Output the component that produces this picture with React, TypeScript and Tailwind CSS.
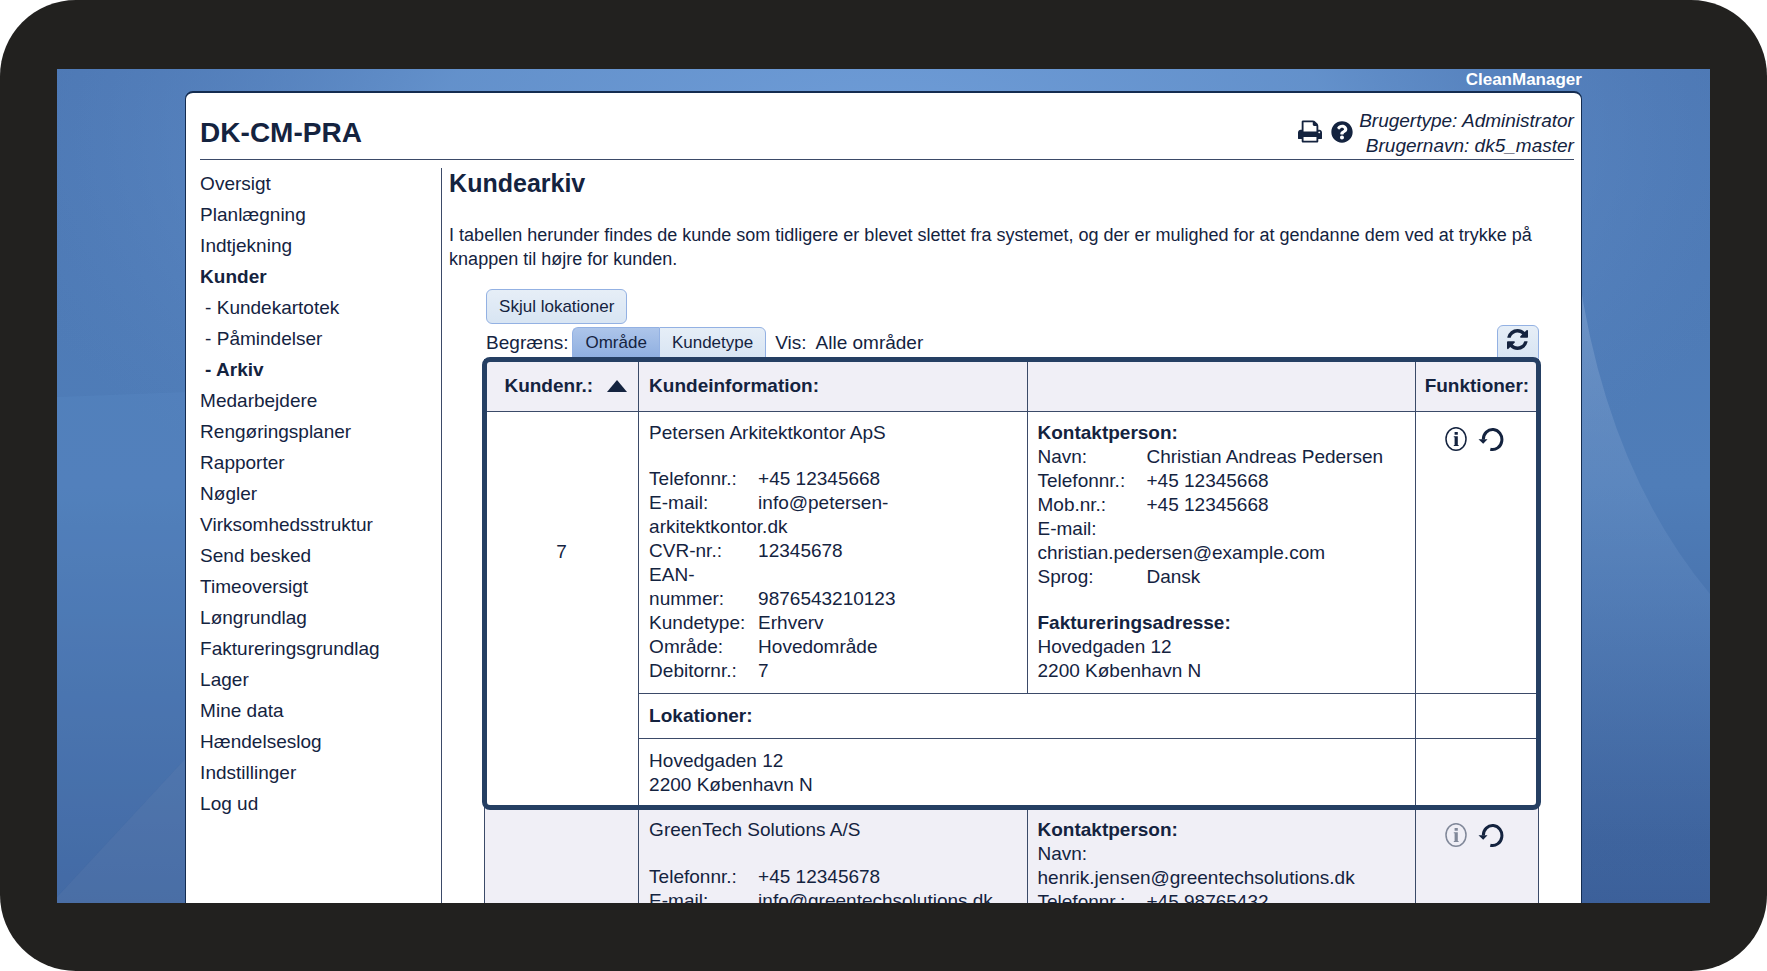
import type { ReactNode } from 'react';
import { FaQuestionCircle } from 'react-icons/fa';

const nav: { label: string; bold?: boolean; sub?: boolean }[] = [
  { label: 'Oversigt' },
  { label: 'Planlægning' },
  { label: 'Indtjekning' },
  { label: 'Kunder', bold: true },
  { label: 'Kundekartotek', sub: true },
  { label: 'Påmindelser', sub: true },
  { label: 'Arkiv', sub: true, bold: true },
  { label: 'Medarbejdere' },
  { label: 'Rengøringsplaner' },
  { label: 'Rapporter' },
  { label: 'Nøgler' },
  { label: 'Virksomhedsstruktur' },
  { label: 'Send besked' },
  { label: 'Timeoversigt' },
  { label: 'Løngrundlag' },
  { label: 'Faktureringsgrundlag' },
  { label: 'Lager' },
  { label: 'Mine data' },
  { label: 'Hændelseslog' },
  { label: 'Indstillinger' },
  { label: 'Log ud' },
];

function Backdrop() {
  return (
    <svg
      className="absolute inset-0 size-full"
      viewBox="0 0 1652 834"
      preserveAspectRatio="none"
      aria-hidden="true"
    >
      <defs>
        <linearGradient id="base" x1="0" y1="0" x2="0" y2="1">
          <stop offset="0" stopColor="#4d78b4" />
          <stop offset="0.5" stopColor="#4f7db8" />
          <stop offset="1" stopColor="#3b5f99" />
        </linearGradient>
        <radialGradient id="glow" cx="0.5" cy="0.1" r="0.55">
          <stop offset="0" stopColor="#6f9dd8" />
          <stop offset="0.5" stopColor="#6795cf" stopOpacity="0.85" />
          <stop offset="1" stopColor="#5580bd" stopOpacity="0" />
        </radialGradient>
        <linearGradient id="sweep" x1="0" y1="0" x2="0" y2="1">
          <stop offset="0" stopColor="#86a6d0" stopOpacity="0.55" />
          <stop offset="0.5" stopColor="#6c93c8" stopOpacity="0.25" />
          <stop offset="0.9" stopColor="#3f659f" stopOpacity="0.2" />
        </linearGradient>
      </defs>
      <rect width="1652" height="834" fill="url(#base)" />
      <rect width="1652" height="834" fill="url(#glow)" />
      <path d="M0 328 L128 323 V690 L0 828 Z" fill="#5a8cc6" opacity="0.25" />
      <path d="M0 828 L128 690 V834 H0 Z" fill="#6d93c4" opacity="0.3" />
      <path d="M1520 200 Q1548 400 1652 525 V834 H1520 Z" fill="url(#sweep)" />
    </svg>
  );
}

function PrintIcon() {
  return (
    <svg viewBox="0 128 1664 1536" className="h-[23px] w-6" fill="currentColor" aria-hidden="true">
      <path d="M384 1536h896v-256h-896v256zm0-640h896v-384h-160q-40 0-68-28t-28-68v-160h-640v640zm1152 64q0-26-19-45t-45-19-45 19-19 45 19 45 45 19 45-19 19-45zm128 0v416q0 13-9.500 22.500t-22.500 9.500h-224v160q0 40-28 68t-68 28h-960q-40 0-68-28t-28-68v-160h-224q-13 0-22.500-9.500t-9.500-22.500v-416q0-79 56.500-135.500t135.500-56.500h64v-544q0-40 28-68t68-28h672q40 0 88 20t76 48l152 152q28 28 48 76t20 88v256h64q79 0 135.500 56.500t56.500 135.500z" />
    </svg>
  );
}

function RefreshIcon() {
  return (
    <svg viewBox="0 0 1536 1536" className="size-[21px]" fill="currentColor" aria-hidden="true">
      <path d="M1511 928q0 5-1 7-64 268-268 434.500T764 1536q-146 0-282.500-55T238 1324l-129 129q-19 19-45 19t-45-19-19-45V960q0-26 19-45t45-19h448q26 0 45 19t19 45-19 45l-137 137q71 66 161 102t187 36q134 0 250-65t186-179q11-17 53-117 8-23 30-23h192q13 0 22.500 9.500t9.500 22.500zm25-800v448q0 26-19 45t-45 19h-448q-26 0-45-19t-19-45 19-45l138-138Q969 256 768 256q-134 0-250 65T332 500q-11 17-53 117-8 23-30 23H50q-13 0-22.500-9.500T18 608v-7q65-268 270-434.500T768 0q146 0 284 55.500T1297 212l130-129q19-19 45-19t45 19 19 45z" />
    </svg>
  );
}

function InfoIcon() {
  return (
    <svg viewBox="0 0 24 26" className="h-[26px] w-6" aria-hidden="true">
      <ellipse cx="12" cy="13" rx="10" ry="11.300" fill="none" stroke="currentColor" strokeWidth="1.500" />
      <path d="M10.600 6h3.200v2.800h-3.200zM9.800 10.300h4V19h.8v.9H9.800V19h.8v-7.800h-.8z" fill="currentColor" />
    </svg>
  );
}

function RestoreIcon() {
  return (
    <svg viewBox="0 0 26 26" className="size-[26px]" aria-hidden="true">
      <path d="M5.300 13.500a9.300 10 0 1 1 7 9.700" fill="none" stroke="currentColor" strokeWidth="3" />
      <path d="M.5 13.200h9L5.200 17.800z" fill="currentColor" />
    </svg>
  );
}

function Field({ label, children }: { label: string; children: ReactNode }) {
  return (
    <div>
      <span className="inline-block w-[109px]">{label}</span>
      {children}
    </div>
  );
}

function Actions({ customer, dimmed }: { customer: string; dimmed?: boolean }) {
  return (
    <div className="flex justify-center gap-[10px] pr-[6px]">
      <button
        type="button"
        disabled={dimmed}
        aria-label={`Information om ${customer}`}
        className="disabled:opacity-50"
      >
        <InfoIcon />
      </button>
      <button type="button" aria-label={`Gendan ${customer}`}>
        <RestoreIcon />
      </button>
    </div>
  );
}

export default function App() {
  return (
    <div className="flex h-screen flex-col overflow-hidden rounded-[76px] bg-[#22211f] px-[57px] pt-[69px] pb-[68px] font-['Liberation_Sans',Arial,sans-serif] text-[19px] leading-6 text-[#14233f]">
      <div className="relative min-h-0 flex-1 overflow-hidden">
        <Backdrop />
        <div className="relative mx-auto flex h-full w-[84.500%] flex-col">
          <div className="shrink-0 text-right text-[17px] leading-[22px] font-bold text-white">CleanManager</div>
          <div className="flex-1 rounded-t-lg border border-t-2 border-[#142c50] bg-white pr-[7px] pl-[14px]">
            <header className="flex items-center justify-between border-b border-[#3b4a68] pt-[15px] pb-px">
              <h1 className="text-[28px] leading-9 font-bold">DK-CM-PRA</h1>
              <div className="flex items-center">
                <div className="flex items-center gap-[9px] pr-[6px] pb-[3px]">
                  <button type="button" aria-label="Udskriv">
                    <PrintIcon />
                  </button>
                  <a href="#hjaelp" aria-label="Hjælp">
                    <FaQuestionCircle className="size-[22px]" />
                  </a>
                </div>
                <div className="text-right leading-[25px] italic">
                  <div>Brugertype: Administrator</div>
                  <div>Brugernavn: dk5_master</div>
                </div>
              </div>
            </header>

            <div className="flex pt-[8px]">
              <nav className="w-[241px] shrink-0" aria-label="Hovedmenu">
                <ul>
                  {nav.map((item) => (
                    <li key={item.label} className={item.sub ? 'pl-[5px]' : ''}>
                      <a
                        href="#menu"
                        className={item.bold ? 'block leading-[31px] font-bold' : 'block leading-[31px]'}
                      >
                        {item.sub ? `- ${item.label}` : item.label}
                      </a>
                    </li>
                  ))}
                </ul>
              </nav>

              <main className="min-h-[760px] min-w-0 flex-1 border-l border-[#3b4a68] pl-[7px]">
                <h2 className="text-[25px] leading-[31px] font-bold">Kundearkiv</h2>
                <p className="pt-[24px] text-[18px] leading-6">
                  I tabellen herunder findes de kunde som tidligere er blevet slettet fra systemet, og der er mulighed
                  for at gendanne dem ved at trykke på knappen til højre for kunden.
                </p>
                <div className="pt-[18px] pr-[35px] pl-[37px]">
                  <button
                    type="button"
                    className="block h-[35px] rounded-md border border-[#93b1e3] bg-linear-to-b from-[#e6eef7] to-[#d8e5f3] px-[12px] text-[17px]"
                  >
                    Skjul lokationer
                  </button>
                  <div className="flex h-[34px] items-center pt-[2px]">
                    <span className="mt-[2px]">Begræns:</span>
                    <div className="mt-[2px] ml-[4px] flex h-[32px]">
                      <button
                        type="button"
                        aria-pressed="true"
                        className="rounded-tl-md border border-r-0 border-[#93b1e3] bg-linear-to-b from-[#adc5ea] to-[#8fafe0] px-[12px] text-[17px]"
                      >
                        Område
                      </button>
                      <button
                        type="button"
                        aria-pressed="false"
                        className="rounded-tr-md border border-[#93b1e3] bg-linear-to-b from-[#e6eef7] to-[#d8e5f3] px-[12px] text-[17px]"
                      >
                        Kundetype
                      </button>
                    </div>
                    <span className="mt-[2px] ml-[9px]">Vis:</span>
                    <span className="mt-[2px] ml-[9px]">Alle områder</span>
                    <button
                      type="button"
                      aria-label="Opdater"
                      className="ml-auto flex h-[34px] w-[42px] justify-center rounded-t-md border border-[#93b1e3] bg-linear-to-b from-[#e6eef7] to-[#d8e5f3] pt-[3px]"
                    >
                      <RefreshIcon />
                    </button>
                  </div>

                  <div className="relative mt-px -ml-[2px]">
                    <table className="w-full table-fixed border-collapse text-left align-top [&_td]:border [&_td]:border-[#3b4a68] [&_th]:border [&_th]:border-[#3b4a68]">
                      <colgroup>
                        <col className="w-[154px]" />
                        <col />
                        <col />
                        <col className="w-[123px]" />
                      </colgroup>
                      <thead>
                        <tr className="h-[52px] bg-[#f0eff6]">
                          <th scope="col" className="px-[11px]">
                            <button type="button" className="flex w-full items-center justify-end gap-[14px] font-bold">
                              Kundenr.:
                              <svg viewBox="0 0 20 12" className="h-3 w-5" fill="currentColor" aria-hidden="true">
                                <path d="M10 0 20 12H0z" />
                              </svg>
                            </button>
                          </th>
                          <th scope="col" className="px-[10px]">Kundeinformation:</th>
                          <td />
                          <th scope="col" className="text-center">Funktioner:</th>
                        </tr>
                      </thead>
                      <tbody>
                        <tr className="align-top">
                          <td rowSpan={3} className="pt-[128px] text-center">7</td>
                          <td className="px-[10px] pt-[9px] pb-[10px]">
                            <div className="h-[46px]">Petersen Arkitektkontor ApS</div>
                            <Field label="Telefonnr.:">+45 12345668</Field>
                            <Field label="E-mail:">info@petersen-</Field>
                            <div>arkitektkontor.dk</div>
                            <Field label="CVR-nr.:">12345678</Field>
                            <div>EAN-</div>
                            <Field label="nummer:">9876543210123</Field>
                            <Field label="Kundetype:">Erhverv</Field>
                            <Field label="Område:">Hovedområde</Field>
                            <Field label="Debitornr.:">7</Field>
                          </td>
                          <td className="px-[10px] pt-[9px] pb-[10px]">
                            <div className="font-bold">Kontaktperson:</div>
                            <Field label="Navn:">Christian Andreas Pedersen</Field>
                            <Field label="Telefonnr.:">+45 12345668</Field>
                            <Field label="Mob.nr.:">+45 12345668</Field>
                            <div>E-mail:</div>
                            <div>christian.pedersen@example.com</div>
                            <Field label="Sprog:">Dansk</Field>
                            <div className="pt-[22px] font-bold">Faktureringsadresse:</div>
                            <div>Hovedgaden 12</div>
                            <div>2200 København N</div>
                          </td>
                          <td className="pt-[14px]">
                            <Actions customer="Petersen Arkitektkontor ApS" />
                          </td>
                        </tr>
                        <tr className="h-[45px]">
                          <td colSpan={2} className="px-[10px] font-bold">Lokationer:</td>
                          <td />
                        </tr>
                        <tr className="h-[69px]">
                          <td colSpan={2} className="px-[10px]">
                            <div>Hovedgaden 12</div>
                            <div>2200 København N</div>
                          </td>
                          <td />
                        </tr>
                        <tr className="bg-[#f0eff6] align-top">
                          <td />
                          <td className="px-[10px] pt-[10px]">
                            <div className="h-[47px]">GreenTech Solutions A/S</div>
                            <Field label="Telefonnr.:">+45 12345678</Field>
                            <Field label="E-mail:">info@greentechsolutions.dk</Field>
                          </td>
                          <td className="px-[10px] pt-[10px]">
                            <div className="font-bold">Kontaktperson:</div>
                            <div>Navn:</div>
                            <div>henrik.jensen@greentechsolutions.dk</div>
                            <Field label="Telefonnr.:">+45 98765432</Field>
                          </td>
                          <td className="pt-[14px]">
                            <Actions customer="GreenTech Solutions A/S" dimmed />
                          </td>
                        </tr>
                      </tbody>
                    </table>
                    <div className="pointer-events-none absolute -top-[2px] -right-[2px] -left-[2px] h-[453px] rounded-lg border-5 border-[#253f63]" />
                  </div>
                </div>
              </main>
            </div>
          </div>
        </div>
      </div>
    </div>
  );
}
